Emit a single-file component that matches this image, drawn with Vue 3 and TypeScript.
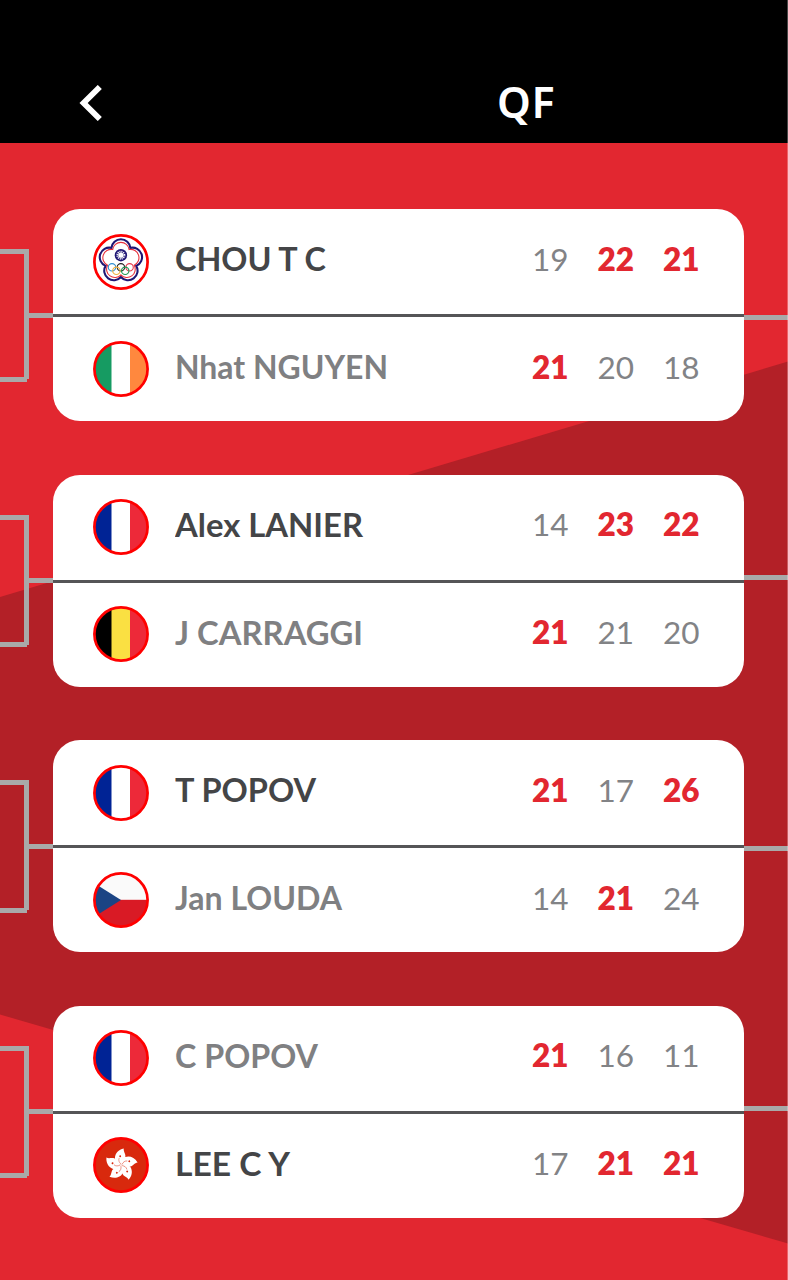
<script setup lang="ts">
type FlagCode = 'tpe' | 'irl' | 'fra' | 'bel' | 'cze' | 'hkg'

interface Player {
  name: string
  width: number
  flag: FlagCode
  winner: boolean
  scores: [number, number, number]
}

interface Match {
  exit: string
  players: [Player, Player]
}

const matches: Match[] = [
  {
    exit: 'low',
    players: [
      { name: 'CHOU T C', width: 151, flag: 'tpe', winner: true, scores: [19, 22, 21] },
      { name: 'Nhat NGUYEN', width: 213, flag: 'irl', winner: false, scores: [21, 20, 18] },
    ],
  },
  {
    exit: 'high',
    players: [
      { name: 'Alex LANIER', width: 188, flag: 'fra', winner: true, scores: [14, 23, 22] },
      { name: 'J CARRAGGI', width: 188, flag: 'bel', winner: false, scores: [21, 21, 20] },
    ],
  },
  {
    exit: 'low',
    players: [
      { name: 'T POPOV', width: 141, flag: 'fra', winner: true, scores: [21, 17, 26] },
      { name: 'Jan LOUDA', width: 167, flag: 'cze', winner: false, scores: [14, 21, 24] },
    ],
  },
  {
    exit: 'high',
    players: [
      { name: 'C POPOV', width: 143, flag: 'fra', winner: false, scores: [21, 16, 11] },
      { name: 'LEE C Y', width: 115, flag: 'hkg', winner: true, scores: [17, 21, 21] },
    ],
  },
]

const stripes: Partial<Record<FlagCode, [string, string, string]>> = {
  irl: ['#169b62', '#ffffff', '#ff883e'],
  fra: ['#002395', '#ffffff', '#ed2939'],
  bel: ['#000000', '#fae042', '#ed2939'],
}

function isBeaten(match: Match, player: number, set: number): boolean {
  return match.players[player].scores[set] < match.players[1 - player].scores[set]
}

// Five-lobed blossom outline: an arc of radius r between neighbouring notches.
function blossom(notch: number, r: number): string {
  const points = [0, 1, 2, 3, 4].map((i) => {
    const a = ((-126 + i * 72) * Math.PI) / 180
    return `${(notch * Math.cos(a)).toFixed(2)} ${(notch * Math.sin(a)).toFixed(2)}`
  })
  return `M${points[0]}` + [1, 2, 3, 4, 0].map((i) => `A${r} ${r} 0 0 1 ${points[i]}`).join('') + 'Z'
}

const petalAngles = [0, 72, 144, 216, 288]
</script>

<template>
  <div class="screen">
    <header class="topbar">
      <svg class="back" viewBox="0 0 24 36" aria-label="Back">
        <path d="M21.8 2 L5.6 18 L21.8 34" />
      </svg>
      <h1 class="title">QF</h1>
    </header>

    <main class="draw">
      <svg class="backdrop" viewBox="0 0 788 1138" preserveAspectRatio="none">
        <path d="M0 454 L788 218.5 V1100.5 L0 871.5 Z" />
      </svg>
      <section v-for="(match, m) in matches" :key="m" class="match">
        <div class="bracket"><i class="arm top" /><i class="arm mid" /><i class="arm bottom" /><i class="stem" /></div>
        <div class="card">
          <div v-for="(player, p) in match.players" :key="player.name" class="row">
            <svg class="flag" viewBox="0 0 56 56">
              <defs>
                <clipPath :id="`disc-${m}-${p}`"><circle cx="28" cy="28" r="27" /></clipPath>
              </defs>
              <g :clip-path="`url(#disc-${m}-${p})`">
                <template v-if="stripes[player.flag]">
                  <rect
                    v-for="(colour, s) in stripes[player.flag]"
                    :key="s"
                    :x="[0, 18.5, 37][s]"
                    y="0"
                    width="19"
                    height="56"
                    :fill="colour"
                  />
                </template>
                <template v-else-if="player.flag === 'cze'">
                  <rect width="56" height="56" fill="#fafafa" />
                  <rect y="27.8" width="56" height="28.2" fill="#d91a25" />
                  <path d="M-14 1.5 L28 28 L-14 54.5 Z" fill="#1b4484" />
                </template>
                <template v-else-if="player.flag === 'hkg'">
                  <rect width="56" height="56" fill="#d8290d" />
                  <g transform="translate(28.2 28)">
                    <g v-for="a in petalAngles" :key="a" :transform="`rotate(${a})`">
                      <path
                        d="M0 0 C-9 -1.5 -8.2 -14 2.6 -16.4 C1.6 -12.8 6.6 -9.8 2.8 -5.4 C1 -3.6 .4 -2.4 0 0Z"
                        fill="#fff"
                      />
                      <path d="M-.3 -1 C-2.2 -2.8 -2.9 -4.6 -2 -7" fill="none" stroke="#d8290d" stroke-width=".45" />
                      <circle cx="-1" cy="-8.8" r=".95" fill="#d8290d" />
                    </g>
                  </g>
                </template>
                <template v-else>
                  <rect width="56" height="56" fill="#fff" />
                  <g transform="translate(27.9 26.9)" fill="none">
                    <path :d="blossom(16.1, 9.5)" stroke="#1f1675" stroke-width="2.1" />
                    <path :d="blossom(14, 8.3)" stroke="#e8303c" stroke-width="1.1" />
                  </g>
                  <circle cx="27.9" cy="21.2" r="6.2" fill="#1f1675" />
                  <circle
                    cx="27.9"
                    cy="21.2"
                    r="3.6"
                    fill="none"
                    stroke="#fff"
                    stroke-width="1.8"
                    stroke-dasharray="1.05 .835"
                  />
                  <circle cx="27.9" cy="21.2" r="2.6" fill="#fff" />
                  <g fill="none" stroke-width="1.1">
                    <circle cx="19" cy="33.3" r="3.7" stroke="#2f8fd0" />
                    <circle cx="27.9" cy="33.3" r="3.7" stroke="#222" />
                    <circle cx="36.6" cy="33.3" r="3.7" stroke="#e4384c" />
                    <circle cx="23.4" cy="36.8" r="3.7" stroke="#f0b040" />
                    <circle cx="32.2" cy="36.8" r="3.7" stroke="#1f9a54" />
                  </g>
                </template>
              </g>
              <circle cx="28" cy="28" r="26.6" fill="none" stroke="#f00" stroke-width="2.7" />
            </svg>
            <svg class="name" :class="{ winner: player.winner }" viewBox="0 0 300 44">
              <text x="0" y="33" :textLength="player.width" lengthAdjust="spacingAndGlyphs">{{ player.name }}</text>
            </svg>
            <div class="scores">
              <span v-for="(score, s) in player.scores" :key="s" class="score" :class="{ won: !isBeaten(match, p, s) }">{{
                score
              }}</span>
            </div>
          </div>
        </div>
        <div class="exit" :class="match.exit" />
      </section>
    </main>
  </div>
</template>

<style>
body {
  margin: 0;
  background: #e22730;
}
</style>

<style scoped>
.screen {
  position: relative;
  width: 788px;
  height: 1280px;
  overflow: hidden;
  display: flex;
  flex-direction: column;
  font-family: Lato, 'Noto Sans', sans-serif;
}
.screen::after {
  content: '';
  position: absolute;
  top: 0;
  right: 0;
  width: 1px;
  height: 100%;
  background: rgba(255, 255, 255, 0.28);
}
.topbar {
  box-sizing: border-box;
  height: 142.5px;
  flex: none;
  background: #000;
  display: flex;
  align-items: flex-start;
  padding: 85px 0 0 78px;
}
.back {
  width: 24px;
  height: 36px;
}
.back path {
  fill: none;
  stroke: #fff;
  stroke-width: 5.8;
}
.title {
  margin: -13px 0 0 395px;
  font: 600 43px/60px 'Noto Sans', 'Open Sans', sans-serif;
  letter-spacing: 0.6px;
  color: #fff;
}
.draw {
  position: relative;
  flex: 1;
  background: #e22730;
  display: flex;
  flex-direction: column;
  gap: 53.5px;
  padding-top: 66.5px;
}
.backdrop {
  position: absolute;
  left: 0;
  top: 0;
  width: 788px;
  height: 1138px;
  fill: #b32027;
}
.match {
  position: relative;
  display: grid;
  grid-template-columns: 53px 691px 44px;
  height: 212px;
  flex: none;
}
.bracket {
  position: relative;
}
.bracket i {
  position: absolute;
  background: #a9a9a9;
}
.arm {
  left: 0;
  height: 5.2px;
}
.arm.top {
  top: 40px;
  width: 29px;
}
.arm.mid {
  top: 103.8px;
  left: 27px;
  width: 26px;
}
.arm.bottom {
  top: 167.5px;
  width: 27px;
}
.stem {
  left: 24px;
  top: 40px;
  width: 5px;
  height: 130px;
}
.exit {
  height: 5px;
  background: #a9a9a9;
}
.exit.low {
  margin-top: 106px;
}
.exit.high {
  margin-top: 100.5px;
}
.card {
  box-sizing: border-box;
  background: #fff;
  border-radius: 27px;
  overflow: hidden;
}
.row {
  box-sizing: border-box;
  height: 104px;
  display: flex;
  align-items: flex-start;
  padding: 23.6px 30px 0 40px;
}
.row:first-child {
  height: 108px;
  padding-top: 24.6px;
  border-bottom: 3px solid #555557;
}
.flag {
  width: 56px;
  height: 56px;
  flex: none;
}
.name {
  width: 300px;
  height: 44px;
  margin: 4.8px 0 0 26px;
  flex: none;
  fill: #7f8082;
  font-size: 31.5px;
  font-weight: 700;
}
.row + .row .name {
  margin-top: 5.6px;
}
.name.winner {
  fill: #444547;
}
.scores {
  margin: 4.4px 0 0 auto;
  display: flex;
}
.row + .row .scores {
  margin-top: 5.3px;
}
.score {
  width: 65.5px;
  text-align: center;
  font-size: 31.5px;
  line-height: 43px;
  color: #828386;
}
.score.won {
  color: #e22730;
  font-weight: 800;
}
</style>
